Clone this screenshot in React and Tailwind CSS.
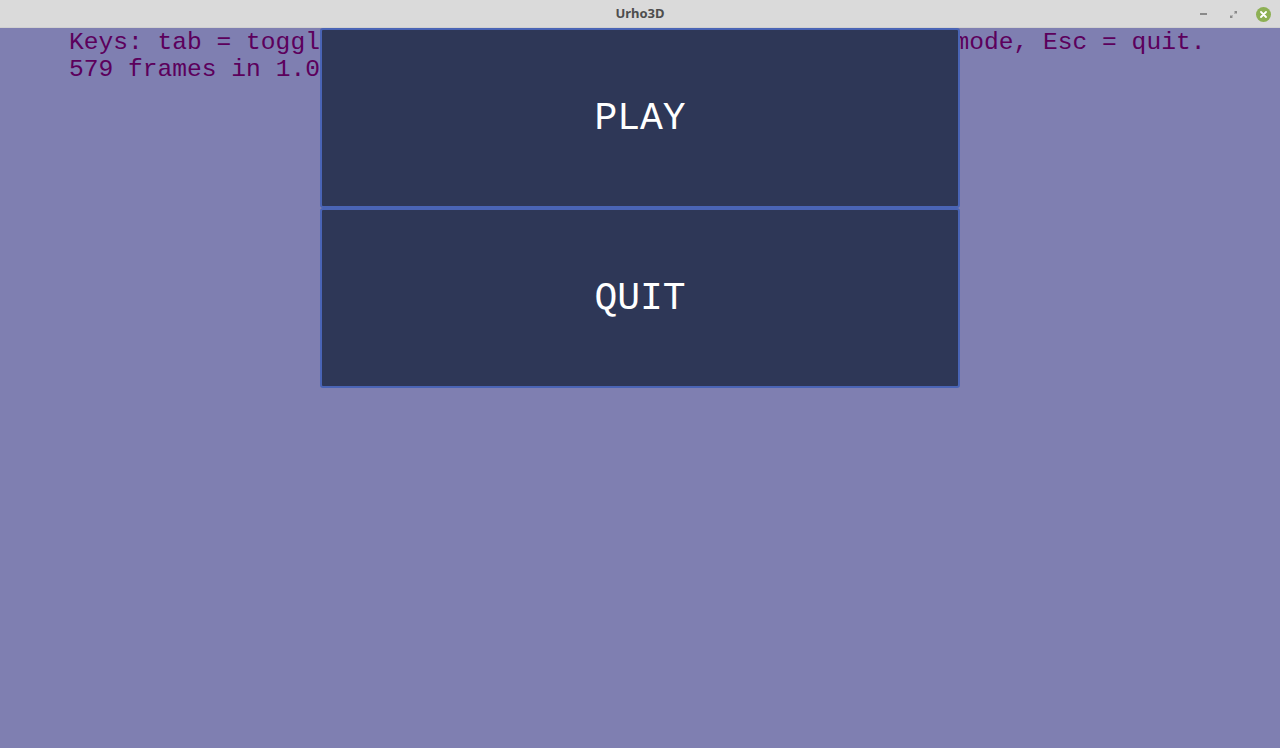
import { useState } from 'react';

const mono = { fontFamily: '"Liberation Mono", "DejaVu Sans Mono", monospace' };

function TitleBar() {
  return (
    <div className="relative flex h-[28px] items-center justify-center bg-[#dadada] border-b border-[#d0d0d0]">
      <span
        className="text-[13px] font-bold text-[#4d4d4d]"
        style={{ fontFamily: '"Noto Sans", "Open Sans", sans-serif' }}
      >
        Urho3D
      </span>
      <div className="absolute right-[9px] top-0 flex h-[28px] items-center gap-[16px]">
        <button type="button" className="flex h-[14px] w-[14px] items-center justify-center">
          <span className="block h-[2px] w-[7px] bg-[#8a8a8a]" />
        </button>
        <button type="button" className="flex h-[14px] w-[14px] items-center justify-center">
          <svg width="9" height="9" viewBox="0 0 9 9">
            <path d="M5 1h3v3z M4 8H1V5z" fill="#8a8a8a" />
            <path d="M7.5 1.5L5.5 3.5 M1.5 7.5L3.5 5.5" stroke="#8a8a8a" strokeWidth="1.3" />
          </svg>
        </button>
        <button
          type="button"
          className="flex h-[15px] w-[15px] items-center justify-center rounded-full bg-[#8db054]"
        >
          <svg width="7" height="7" viewBox="0 0 7 7">
            <path d="M1 1L6 6 M6 1L1 6" stroke="#ffffff" strokeWidth="1.8" strokeLinecap="round" />
          </svg>
        </button>
      </div>
    </div>
  );
}

function MenuButton({ label, onClick }) {
  return (
    <button
      type="button"
      onClick={onClick}
      className="flex h-[180px] w-full items-center justify-center rounded-[3px] border-2 border-[#4a64b5] bg-[#2e3757] text-[38px] text-white"
      style={mono}
    >
      {label}
    </button>
  );
}

export default function App() {
  const [frames] = useState(579);

  return (
    <div className="flex h-[748px] w-[1280px] flex-col overflow-hidden bg-[#7f7fb1]">
      <TitleBar />
      <div className="relative flex-1">
        <div
          className="whitespace-pre pl-[69px] pt-[1px] text-[24.6px] leading-[27px] text-[#5c005c]"
          style={mono}
        >
          <div>Keys: tab = toggle mouse, WASD = move, F1 = debug, F2 = HUD mode, Esc = quit.</div>
          <div>{frames} frames in 1.000000 seconds = {frames} fps</div>
        </div>

        <div className="absolute left-[320px] top-0 flex w-[640px] flex-col">
          <MenuButton label="PLAY" />
          <MenuButton label="QUIT" />
        </div>
      </div>
    </div>
  );
}
